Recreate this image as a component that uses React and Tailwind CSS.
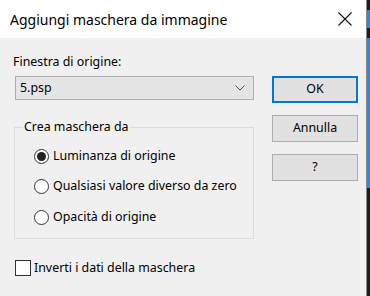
import React, { useState } from 'react';

const font = { fontFamily: '"Segoe UI", "Noto Sans", "Open Sans", sans-serif' };

const Radio = ({ checked, label, onClick }) => (
  <div className="flex items-center h-[30.5px] cursor-default" onClick={onClick}>
    <div className="w-[15px] h-[15px] rounded-full border border-[#333] bg-white flex items-center justify-center">
      {checked && <div className="w-[9px] h-[9px] rounded-full bg-[#222]" />}
    </div>
    <span className="ml-[4px] text-[12.4px] text-black">{label}</span>
  </div>
);

const Button = ({ children, primary }) => (
  <button
    className={`w-[86px] h-[27px] bg-[#e1e1e1] text-[12.4px] text-black flex items-center justify-center ${
      primary ? 'border-2 border-[#0078d7]' : 'border border-[#adadad]'
    }`}
  >
    {children}
  </button>
);

const App = () => {
  const [source, setSource] = useState(0);
  const [invert, setInvert] = useState(false);

  const options = ['Luminanza di origine', 'Qualsiasi valore diverso da zero', 'Opacità di origine'];

  return (
    <div className="w-[370px] h-[296px] flex bg-[#1c1c1c] overflow-hidden" style={font}>
      <div className="w-[367px] h-[296px] flex flex-col bg-[#f0f0f0] border-r border-[#8a8a8a]">
        {/* title bar */}
        <div className="h-[38px] bg-white flex items-center justify-between pl-[10px] pr-[13px] shrink-0">
          <span className="text-[14px] text-black">Aggiungi maschera da immagine</span>
          <svg width="16" height="16" viewBox="0 0 16 16">
            <path d="M1.5 1.5 L14.5 14.5 M14.5 1.5 L1.5 14.5" stroke="#111" strokeWidth="1.1" />
          </svg>
        </div>

        <div className="flex pl-[13px] pt-[16px]">
          <div className="w-[241px] flex flex-col">
            <span className="text-[12.4px] text-black leading-[16px]">Finestra di origine:</span>
            <div className="mt-[6px] ml-[2px] h-[24px] bg-[#e5e5e5] border border-[#adadad] flex items-center justify-between pl-[4px] pr-[8px]">
              <span className="text-[12.4px] text-black">5.psp</span>
              <svg width="10" height="6" viewBox="0 0 10 6">
                <path d="M0.5 0.5 L5 5 L9.5 0.5" stroke="#555" fill="none" strokeWidth="1" />
              </svg>
            </div>

            <div className="mt-[27px] ml-[1px] h-[112px] border border-[#dcdcdc] relative pl-[19px] pt-[13px]">
              <span className="absolute -top-[9px] left-[8px] px-[1px] bg-[#f0f0f0] text-[12.4px] text-black leading-[16px]">
                Crea maschera da
              </span>
              {options.map((o, i) => (
                <Radio key={o} label={o} checked={source === i} onClick={() => setSource(i)} />
              ))}
            </div>
          </div>

          <div className="ml-[18px] pt-[22px] flex flex-col gap-[12px]">
            <Button primary>OK</Button>
            <Button>Annulla</Button>
            <Button>?</Button>
          </div>
        </div>

        <div className="flex items-center pl-[15px] mt-[20px] cursor-default" onClick={() => setInvert(!invert)}>
          <div className="w-[16px] h-[16px] border border-[#333] bg-white flex items-center justify-center">
            {invert && (
              <svg width="12" height="12" viewBox="0 0 12 12">
                <path d="M2 6 L5 9 L10 3" stroke="#222" fill="none" strokeWidth="1.5" />
              </svg>
            )}
          </div>
          <span className="ml-[3px] text-[12.4px] text-black">Inverti i dati della maschera</span>
        </div>
      </div>
      <div className="flex flex-col w-[3px]">
        <div className="h-[10px] bg-[#1c1c1c]" />
        <div className="h-[18px] bg-[#2b8ae6]" />
        <div className="h-[10px] bg-[#1c1c1c]" />
        <div className="h-[150px] bg-[#2b8ae6]" />
      </div>
    </div>
  );
};

export default App;
